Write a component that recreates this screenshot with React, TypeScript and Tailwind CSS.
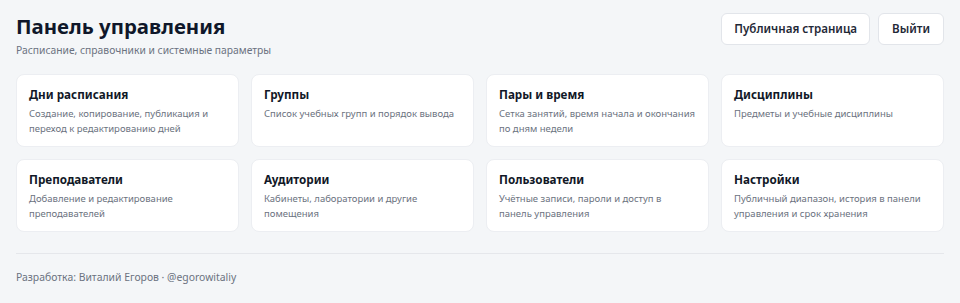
import React from 'react';

const sections = [
  { title: 'Дни расписания', text: 'Создание, копирование, публикация и переход к редактированию дней' },
  { title: 'Группы', text: 'Список учебных групп и порядок вывода' },
  { title: 'Пары и время', text: 'Сетка занятий, время начала и окончания по дням недели' },
  { title: 'Дисциплины', text: 'Предметы и учебные дисциплины' },
  { title: 'Преподаватели', text: 'Добавление и редактирование преподавателей' },
  { title: 'Аудитории', text: 'Кабинеты, лаборатории и другие помещения' },
  { title: 'Пользователи', text: 'Учётные записи, пароли и доступ в панель управления' },
  { title: 'Настройки', text: 'Публичный диапазон, история в панели управления и срок хранения' },
];

export default function App() {
  return (
    <div className="min-h-[303px] bg-[#f4f6f8] px-4 pt-3 font-['Noto_Sans',sans-serif] text-[#111827]">
      {/* Шапка */}
      <div className="flex items-start justify-between">
        <div>
          <h1 className="text-[20.4px] font-bold leading-[28px] text-[#0f172a]">Панель управления</h1>
          <p className="mt-[2px] text-[10.3px] leading-[16px] text-[#6b7280]">Расписание, справочники и системные параметры</p>
        </div>
        <div className="mt-px flex gap-2">
          <button className="h-8 rounded-md border border-[#e2e5ea] bg-white px-[12px] text-[11.6px] font-semibold text-[#1f2937]">
            Публичная страница
          </button>
          <button className="h-8 rounded-md border border-[#e2e5ea] bg-white px-[13px] text-[11.6px] font-semibold text-[#1f2937]">
            Выйти
          </button>
        </div>
      </div>

      {/* Разделы */}
      <div className="mt-4 grid grid-cols-4 gap-3">
        {sections.map((s) => (
          <div key={s.title} className="min-h-[73px] rounded-lg border border-[#eceef2] bg-white px-3 pt-[10px] pb-[10px]">
            <h3 className="text-[11.7px] font-bold leading-[18px] text-[#111827]">{s.title}</h3>
            <p className="mt-[3px] text-[9.5px] leading-[15px] text-[#6b7280]">{s.text}</p>
          </div>
        ))}
      </div>

      <div className="mt-[21px] border-t border-[#e5e7eb] pt-[15px] pb-4">
        <p className="text-[10.4px] leading-[16px] text-[#6b7280]">Разработка: Виталий Егоров · @egorowitaliy</p>
      </div>
    </div>
  );
}
